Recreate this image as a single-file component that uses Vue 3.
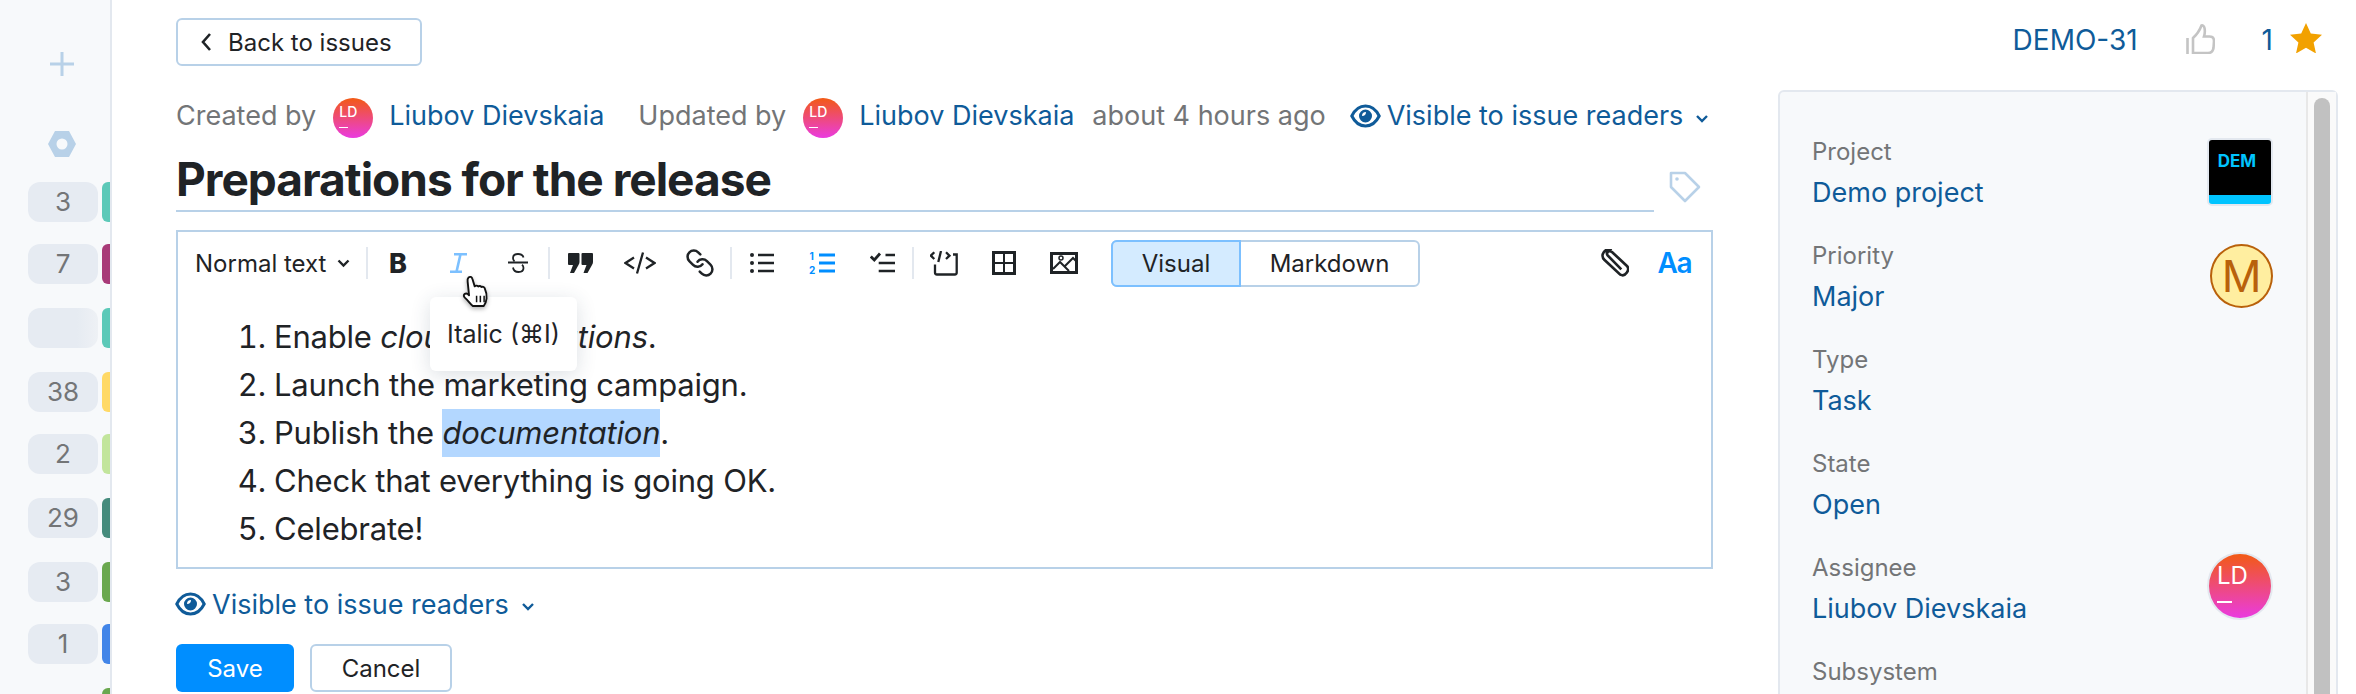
<script setup>
const counters = [
  { count: '3', color: '#5cc9b8', gap: 0 },
  { count: '7', color: '#a83a78', gap: 22 },
  { count: '', color: '#5cc9b8', gap: 24, fade: true },
  { count: '38', color: '#ffd966', gap: 24 },
  { count: '2', color: '#c2e59c', gap: 22 },
  { count: '29', color: '#458b7c', gap: 24 },
  { count: '3', color: '#6aa84f', gap: 24 },
  { count: '1', color: '#4285e8', gap: 22 },
  { count: null, color: '#6aa84f', gap: 24 },
];

const fields = [
  { label: 'Project', value: 'Demo project', icon: 'project' },
  { label: 'Priority', value: 'Major', icon: 'priority' },
  { label: 'Type', value: 'Task' },
  { label: 'State', value: 'Open' },
  { label: 'Assignee', value: 'Liubov Dievskaia', icon: 'avatar' },
  { label: 'Subsystem', value: '' },
];
</script>

<template>
  <div class="page">
    <aside class="sidebar">
      <svg class="plus" width="24" height="24" viewBox="0 0 24 24">
        <path d="M12 0v24M0 12h24" stroke="#b8d1e8" stroke-width="3" fill="none" />
      </svg>
      <svg class="hex" width="28" height="26" viewBox="0 0 28 26">
        <path fill-rule="evenodd" d="M7 0h14l7 13-7 13H7L0 13zM14 7.500a5.500 5.500 0 1 0 0 11 5.500 5.500 0 0 0 0-11z" fill="#b8d1e8" />
      </svg>
      <div v-for="(row, i) in counters" :key="i" class="counter" :style="{ marginTop: row.gap + 'px' }">
        <span v-if="row.count !== null" class="pill" :class="{ fade: row.fade }">{{ row.count }}</span>
        <span class="tab" :style="{ background: row.color }"></span>
      </div>
    </aside>

    <main class="main">
      <section class="issue">
        <button class="back">
          <svg width="12" height="20" viewBox="0 0 12 20">
            <path d="M10 2L3 10l7 8" stroke="#1f2326" stroke-width="2.600" fill="none" />
          </svg>
          Back to issues
        </button>

        <div class="meta">
          <span class="muted">Created by</span>
          <span class="avatar small"><b>LD</b><i></i></span>
          <a class="link name">Liubov Dievskaia</a>
          <span class="muted updated">Updated by</span>
          <span class="avatar small"><b>LD</b><i></i></span>
          <a class="link name">Liubov Dievskaia</a>
          <span class="muted ago">about 4 hours ago</span>
          <a class="link visible above">
            <svg width="31" height="24" viewBox="0 0 31 24">
              <path d="M1.800 12C5 5.500 10 2 15.500 2S26 5.500 29.200 12C26 18.500 21 22 15.500 22S5 18.500 1.800 12z" fill="none" stroke="#0f5b99" stroke-width="3" />
              <path fill-rule="evenodd" d="M15.500 5.500a6.500 6.500 0 1 0 0 13 6.500 6.500 0 0 0 0-13zM16 8a4 4 0 0 1-4 4 4 4 0 0 1 4-4z" fill="#0f5b99" />
            </svg>
            Visible to issue readers
            <svg class="chev" width="14" height="9" viewBox="0 0 14 9">
              <path d="M2 2l5 5 5-5" stroke="#0f5b99" stroke-width="2.400" fill="none" />
            </svg>
          </a>
        </div>

        <div class="title-row">
          <h1 class="title">Preparations for the release</h1>
          <svg class="tag" width="32" height="32" viewBox="0 0 32 32">
            <path d="M2 2h14l14 14-14 14L2 16z" fill="none" stroke="#b8d1e8" stroke-width="2.600" stroke-linejoin="round" />
            <circle cx="8" cy="8" r="1.800" fill="#b8d1e8" />
          </svg>
        </div>

        <div class="editor">
          <div class="toolbar">
            <div class="format">
              Normal text
              <svg width="13" height="9" viewBox="0 0 13 9">
                <path d="M1.500 1.500l5 5 5-5" stroke="#1f2326" stroke-width="2.400" fill="none" />
              </svg>
            </div>
            <span class="sep"></span>
            <span class="tool bold">B</span>
            <span class="tool">
              <svg width="17" height="20" viewBox="0 0 17 20">
                <path d="M4 1.300h13M0 18.700h12M10.500 1.300L6.500 18.700" stroke="#7cc0ff" stroke-width="2.600" fill="none" />
              </svg>
            </span>
            <span class="tool">
              <svg width="20" height="20" viewBox="0 0 20 20">
                <path d="M0 9.500h20M15.500 4.500C15 2.500 13 1 10 1 7 1 5 2.500 5 5c0 1.500.5 2.500 1.500 3.200M5 14.500c.5 3 2.500 4.500 5.500 4.500s5-1.500 5-4c0-1.500-.5-2.500-1.500-3.200" stroke="#1f2326" stroke-width="1.800" fill="none" />
              </svg>
            </span>
            <span class="sep"></span>
            <span class="tool">
              <svg width="25" height="20" viewBox="0 0 25 20">
                <path d="M1 0h9.500a1 1 0 0 1 1 1v8c0 1-.3 2-1 3l-4.500 8H2l3-8H1a1 1 0 0 1-1-1V1a1 1 0 0 1 1-1z" fill="#1f2326" />
                <path d="M14.500 0H24a1 1 0 0 1 1 1v8c0 1-.3 2-1 3l-4.500 8h-4l3-8h-4a1 1 0 0 1-1-1V1a1 1 0 0 1 1-1z" fill="#1f2326" />
              </svg>
            </span>
            <span class="tool">
              <svg width="32" height="22" viewBox="0 0 32 22">
                <path d="M10 5.500L1.500 11l8.500 5.500M22 5.500l8.500 5.500-8.500 5.500M19 .5L13 21.500" stroke="#1f2326" stroke-width="2.300" fill="none" />
              </svg>
            </span>
            <span class="tool">
              <svg width="30" height="30" viewBox="0 0 24 24">
                <g transform="translate(24 0) scale(-1 1)" stroke="#1f2326" stroke-width="2" fill="none" stroke-linecap="round">
                  <path d="M10 13a5 5 0 0 0 7.540.540l3-3a5 5 0 0 0-7.070-7.070l-1.720 1.710" />
                  <path d="M14 11a5 5 0 0 0-7.540-.540l-3 3a5 5 0 0 0 7.070 7.070l1.710-1.710" />
                </g>
              </svg>
            </span>
            <span class="sep"></span>
            <span class="tool">
              <svg width="24" height="22" viewBox="0 0 24 22">
                <circle cx="2" cy="3" r="2" fill="#1f2326" />
                <circle cx="2" cy="11" r="2" fill="#1f2326" />
                <circle cx="2" cy="19" r="2" fill="#1f2326" />
                <path d="M8 3h16M8 11h16M8 19h16" stroke="#1f2326" stroke-width="2.600" />
              </svg>
            </span>
            <span class="tool">
              <svg width="26" height="26" viewBox="0 -2 26 26">
                <text x="0.500" y="8" class="num">1</text>
                <text x="0" y="21.500" class="num">2</text>
                <path d="M10 3h16M10 11h16M10 19h16" stroke="#008eff" stroke-width="2.800" />
              </svg>
            </span>
            <span class="tool">
              <svg width="25" height="22" viewBox="0 0 25 22">
                <path d="M.800 4.500l3.500 3.500L10 1.500" stroke="#1f2326" stroke-width="2.800" fill="none" />
                <path d="M15.500 3H25M8.700 11H25M8.700 19H25" stroke="#1f2326" stroke-width="2.600" />
              </svg>
            </span>
            <span class="sep"></span>
            <span class="tool">
              <svg width="28" height="25" viewBox="0 0 28 25">
                <path d="M4.300 1.300L.800 4.700 4.300 8M16 1.300l3.500 3.400L16 8M11 0L8.300 11" stroke="#1f2326" stroke-width="2.300" fill="none" />
                <path d="M23 3.500h3.700v18a2 2 0 0 1-2 2H7a2 2 0 0 1-2-2v-8" stroke="#1f2326" stroke-width="2.300" fill="none" />
              </svg>
            </span>
            <span class="tool">
              <svg width="24" height="24" viewBox="0 0 24 24">
                <path fill-rule="evenodd" d="M0 0h24v24H0zM3 3v8h8V3zM13 3v8h8V3zM3 13v8h8v-8zM13 13v8h8v-8z" fill="#1f2326" />
              </svg>
            </span>
            <span class="tool">
              <svg width="28" height="22" viewBox="0 0 28 22">
                <rect x="1.500" y="1.500" width="25" height="19" fill="none" stroke="#1f2326" stroke-width="3" />
                <path d="M3 17l7-7 9 9M15 14l8-8 3 3" fill="none" stroke="#1f2326" stroke-width="2" />
                <circle cx="11" cy="6" r="2" fill="none" stroke="#1f2326" stroke-width="1.500" />
              </svg>
            </span>
            <div class="switch">
              <span class="on">Visual</span>
              <span>Markdown</span>
            </div>
            <div class="toolbar-right">
              <svg width="28" height="28" viewBox="0 0 28 28">
                <path d="M91 84L50 42C44 34 54 25 63 32L108 74C118 84 104 108 88 100L40 55C26 42 42 18 62 27" transform="scale(.333) translate(-30 -23)" stroke="#1f2326" stroke-width="8" fill="none" />
              </svg>
              <span class="aa">Aa</span>
            </div>
          </div>
          <div class="body">
            <ol>
              <li>Enable <em>cloud notifications</em>.</li>
              <li>Launch the marketing campaign.</li>
              <li>Publish the <em class="selected">documentation</em>.</li>
              <li>Check that everything is going OK.</li>
              <li>Celebrate!</li>
            </ol>
            <div class="tooltip">Italic (⌘I)</div>
          </div>
          <svg class="cursor" width="32" height="34" viewBox="0 0 34 36">
            <path d="M7 2.500c1.500-1.200 3.500-.5 4 1.500l2.500 8c1-1 2.800-1 3.700.2 1-.9 2.800-.8 3.500.5 1.200-.6 2.800-.2 3.400 1.200 1.500 3.500 2.500 7 2 11-.3 3-1.500 6-3 8H11.500C9 31 7 27.500 3 24c-1.500-1.500-1.300-3.200 0-4 1.500-.8 3.200 0 4.500 1.500L6 7c-.3-2 0-3.500 1-4.500z" fill="#fff" stroke="#111" stroke-width="2" stroke-linejoin="round" />
            <path d="M15.500 22v7M19.500 22v7M23.500 22v7" stroke="#111" stroke-width="1.600" />
          </svg>
        </div>

        <a class="link visible below">
          <svg width="31" height="24" viewBox="0 0 31 24">
            <path d="M1.800 12C5 5.500 10 2 15.500 2S26 5.500 29.200 12C26 18.500 21 22 15.500 22S5 18.500 1.800 12z" fill="none" stroke="#0f5b99" stroke-width="3" />
            <path fill-rule="evenodd" d="M15.500 5.500a6.500 6.500 0 1 0 0 13 6.500 6.500 0 0 0 0-13zM16 8a4 4 0 0 1-4 4 4 4 0 0 1 4-4z" fill="#0f5b99" />
          </svg>
          Visible to issue readers
          <svg class="chev" width="14" height="9" viewBox="0 0 14 9">
            <path d="M2 2l5 5 5-5" stroke="#0f5b99" stroke-width="2.400" fill="none" />
          </svg>
        </a>

        <div class="actions">
          <button class="save">Save</button>
          <button class="cancel">Cancel</button>
        </div>
      </section>

      <section class="side">
        <div class="side-top">
          <a class="link demo">DEMO-31</a>
          <svg class="thumb" width="29" height="30" viewBox="0 0 29 30">
            <path d="M1.500 14v16M7 29h15c3 0 5-2 5.500-5l.5-7c0-3-2-4.500-4.500-4.500H18c1-3 1-6 .5-8.500C18 2 16.500 1 15.500 1.500c-1.500 4-3.500 8-8.500 12.500z" fill="none" stroke="#c4c4c4" stroke-width="2.600" />
          </svg>
          <a class="link one">1</a>
          <svg class="star" width="32" height="30" viewBox="0 0 32 30">
            <path d="M16 0l4.800 10.500L32 11.700l-8.400 7.700L26 30.500 16 24.800 6 30.500l2.400-11.100L0 11.700l11.200-1.200z" fill="#f2a100" />
          </svg>
        </div>
        <div class="panel">
          <div class="fields">
            <div v-for="f in fields" :key="f.label" class="field">
              <div>
                <div class="label">{{ f.label }}</div>
                <a class="link value">{{ f.value }}</a>
              </div>
              <div v-if="f.icon === 'project'" class="project-icon">
                <span>DEM</span>
              </div>
              <div v-else-if="f.icon === 'priority'" class="priority-icon">M</div>
              <span v-else-if="f.icon === 'avatar'" class="avatar big"><b>LD</b><i></i></span>
            </div>
          </div>
          <div class="scroll"><span></span></div>
        </div>
      </section>
    </main>
  </div>
</template>

<style>
html,
body {
  margin: 0;
  overflow: hidden;
}
</style>

<style scoped>
.page {
  display: flex;
  height: 694px;
  overflow: hidden;
  background: #fff;
  color: #1f2326;
  font-family: Inter, "Noto Sans", "DejaVu Sans", sans-serif;
  font-size: 27px;
}

.sidebar {
  box-sizing: border-box;
  width: 112px;
  flex: none;
  padding: 52px 0 0 28px;
  background: #f7f9fb;
  border-right: 2px solid #e3e8ef;
  display: flex;
  flex-direction: column;
}
.plus {
  display: block;
  flex: none;
  margin-left: 22px;
}
.hex {
  display: block;
  flex: none;
  margin: 55px 0 25px 20px;
}
.counter {
  display: flex;
  height: 40px;
  flex: none;
}
.pill {
  width: 70px;
  height: 40px;
  border-radius: 12px;
  background: #e6ebf2;
  color: #737577;
  font-size: 26px;
  line-height: 40px;
  text-align: center;
}
.pill.fade {
  background: linear-gradient(90deg, #e6ebf2 70%, #eef1f5);
}
.tab {
  width: 8px;
  margin-left: 4px;
  border-radius: 6px 0 0 6px;
}
.counter .tab:first-child {
  margin-left: 74px;
}

.main {
  flex: 1;
  display: flex;
  padding: 18px 18px 0 64px;
  min-width: 0;
}
.issue {
  position: relative;
  width: 1537px;
  flex: none;
}

button {
  font: inherit;
  cursor: pointer;
}
.back {
  box-sizing: border-box;
  display: flex;
  align-items: center;
  gap: 16px;
  width: 246px;
  height: 48px;
  padding: 0 0 0 22px;
  background: #fff;
  border: 2px solid #b8d1e8;
  border-radius: 6px;
  color: #1f2326;
  font-size: 24px;
}

.link {
  color: #0f5b99;
}
.muted {
  color: #737577;
}

.meta {
  display: flex;
  align-items: flex-start;
  height: 40px;
  margin-top: 32px;
  line-height: 36px;
  white-space: nowrap;
}
.avatar {
  display: block;
  position: relative;
  border-radius: 50%;
  background: linear-gradient(180deg, #f25a14, #ea3be0);
  color: #fff;
  flex: none;
}
.avatar b {
  position: absolute;
  font-weight: 500;
  line-height: 1;
}
.avatar i {
  position: absolute;
  background: #fff;
  height: 1px;
}
.avatar.small {
  width: 40px;
  height: 40px;
  margin: 0 16px 0 17px;
}
.avatar.small b {
  left: 6px;
  top: 7px;
  font-size: 14px;
}
.avatar.small i {
  left: 6px;
  top: 29px;
  width: 9px;
}
.updated {
  margin-left: 34px;
}
.ago {
  margin-left: 18px;
}
.visible {
  display: flex;
  align-items: center;
  gap: 6px;
}
.visible.above {
  margin-left: 24px;
}
.chev {
  margin: 4px 0 0 6px;
}

.title-row {
  display: flex;
  align-items: flex-start;
  margin-top: 12px;
}
.title {
  flex: none;
  box-sizing: border-box;
  width: 1478px;
  height: 62px;
  margin: 0;
  border-bottom: 2px solid #b8d1e8;
  font-size: 46px;
  font-weight: 700;
  line-height: 58px;
  letter-spacing: -1px;
}
.tag {
  margin: 21px 0 0 15px;
}

.editor {
  position: relative;
  box-sizing: border-box;
  height: 339px;
  margin-top: 18px;
  border: 2px solid #b8d1e8;
}
.toolbar {
  display: flex;
  align-items: center;
  height: 62px;
  padding-left: 17px;
}
.format {
  display: flex;
  align-items: center;
  gap: 11px;
  width: 171px;
  font-size: 24px;
  white-space: nowrap;
}
.sep {
  width: 2px;
  height: 32px;
  background: #e3e8ef;
  flex: none;
}
.tool {
  display: flex;
  align-items: center;
  justify-content: center;
  width: 60px;
  flex: none;
}
.bold {
  font-size: 27px;
  font-weight: 800;
}
.num {
  fill: #008eff;
  font-size: 10px;
  font-weight: 700;
}
.switch {
  display: flex;
  height: 47px;
  margin-left: 17px;
  box-sizing: border-box;
  border: 2px solid #b8d1e8;
  border-radius: 6px;
  font-size: 24px;
  line-height: 43px;
  text-align: center;
}
.switch span {
  box-sizing: border-box;
  width: 177px;
}
.switch .on {
  width: 130px;
  margin: -2px 0 -2px -2px;
  background: #d4ebff;
  border: 2px solid #7cc0ff;
  border-radius: 6px 0 0 6px;
}
.toolbar-right {
  display: flex;
  align-items: center;
  gap: 29px;
  margin-left: auto;
  padding-right: 20px;
}
.aa {
  color: #008eff;
  font-size: 28px;
  font-weight: 600;
  letter-spacing: -1.500px;
}
.body {
  padding-top: 19px;
}
ol {
  margin: 0;
  padding: 0 0 0 96px;
  font-size: 31px;
  line-height: 48px;
  letter-spacing: -0.2px;
}
.selected {
  display: inline-block;
  background: #b3d7ff;
}
.tooltip {
  position: absolute;
  left: 252px;
  top: 65px;
  box-sizing: border-box;
  width: 147px;
  height: 74px;
  border-radius: 6px;
  background: #fff;
  box-shadow: 0 4px 20px rgba(40, 60, 90, 0.16);
  font-size: 25px;
  line-height: 74px;
  text-align: center;
  white-space: nowrap;
}
.cursor {
  position: absolute;
  left: 284px;
  top: 43px;
  filter: drop-shadow(0 2px 2px rgba(0, 0, 0, 0.3));
}

.below {
  margin: 18px 0 0 -1px;
  width: max-content;
  height: 34px;
}
.actions {
  display: flex;
  gap: 16px;
  margin-top: 23px;
}
.save,
.cancel {
  box-sizing: border-box;
  height: 48px;
  border-radius: 6px;
  font-size: 24px;
}
.save {
  width: 118px;
  border: none;
  background: #008eff;
  color: #fff;
}
.cancel {
  width: 142px;
  border: 2px solid #b8d1e8;
  background: #fff;
  color: #1f2326;
}

.side {
  margin-left: 65px;
  width: 560px;
  flex: none;
}
.side-top {
  display: flex;
  align-items: center;
  justify-content: flex-end;
  height: 44px;
  padding-right: 16px;
}
.demo {
  font-size: 28px;
}
.thumb {
  margin: -2px 0 0 48px;
}
.one {
  margin: 0 17px 0 47px;
  font-size: 28px;
}
.star {
  margin-top: -5px;
}
.panel {
  box-sizing: border-box;
  display: flex;
  height: 620px;
  margin-top: 28px;
  background: #f7f9fb;
  border: 2px solid #e3e8ef;
  border-radius: 6px 6px 0 0;
}
.fields {
  flex: 1;
  box-sizing: border-box;
  padding: 44px 33px 0 32px;
}
.field {
  display: flex;
  justify-content: space-between;
  height: 104px;
}
.label {
  color: #737577;
  font-size: 24px;
  line-height: 32px;
}
.value {
  display: block;
  font-size: 27px;
  line-height: 40px;
  margin-top: 5px;
}
.project-icon {
  position: relative;
  box-sizing: border-box;
  width: 66px;
  height: 68px;
  margin-top: 2px;
  border: 2px solid #e3e8ef;
  border-radius: 5px;
  background: linear-gradient(#000 0 86%, #00c4ff 86%);
  color: #00c4ff;
  font-size: 17px;
  font-weight: 700;
  text-align: center;
  padding: 11px 6px 0 0;
  line-height: 1.2;
}
.priority-icon {
  box-sizing: border-box;
  width: 63px;
  height: 64px;
  margin-top: 4px;
  border: 2px solid #b9610b;
  border-radius: 50%;
  background: #ffeea0;
  color: #b9610b;
  font-size: 44px;
  font-weight: 400;
  line-height: 60px;
  text-align: center;
}
.avatar.big {
  width: 62px;
  height: 64px;
  margin: 0;
  border: 2px solid #e3e8ef;
}
.avatar.big b {
  left: 8px;
  top: 10px;
  font-size: 24px;
  font-weight: 400;
}
.avatar.big i {
  left: 8px;
  top: 47px;
  width: 15px;
  height: 2px;
}
.scroll {
  box-sizing: border-box;
  width: 30px;
  padding: 6px 6px 0 6px;
  background: #fafafa;
  border-left: 2px solid #e8e8e8;
}
.scroll span {
  display: block;
  width: 16px;
  height: 100%;
  background: #c1c1c1;
  border-radius: 8px 8px 0 0;
}
</style>
